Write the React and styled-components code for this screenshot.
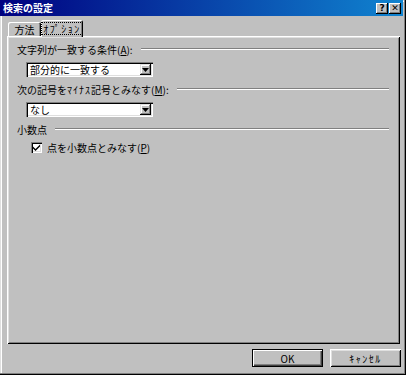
import React from "react";
import styled, { createGlobalStyle } from "styled-components";

const GlobalStyle = createGlobalStyle`
  body {
    margin: 0;
    background: #fff;
    font-family: "Noto Sans CJK JP", "Noto Sans", sans-serif;
  }
`;

const Window = styled.div`
  width: 406px;
  height: 375px;
  box-sizing: border-box;
  background: #c0c0c0;
  display: flex;
  flex-direction: column;
  font-size: 10px;
  color: #000;
  box-shadow: inset -1px -1px #000, inset -2px -2px #808080,
    inset 1px 1px #dfdfdf, inset 2px 2px #fff;
`;

const TitleBar = styled.div`
  width: 403px;
  height: 16px;
  box-sizing: border-box;
  padding: 0 2px 0 3px;
  display: flex;
  align-items: center;
  justify-content: space-between;
  background: linear-gradient(90deg, #000080 0%, #1084d0 100%);
`;

const Title = styled.span`
  color: #fff;
  font-size: 10px;
  font-weight: bold;
  line-height: 16px;
`;

const TitleButtons = styled.div`
  display: flex;
  gap: 1px;
`;

const TitleButton = styled.div`
  width: 12px;
  height: 11px;
  background: #c0c0c0;
  display: flex;
  align-items: center;
  justify-content: center;
  font-family: "DejaVu Sans", sans-serif;
  font-weight: bold;
  font-size: 9px;
  line-height: 1;
  box-shadow: inset -1px -1px #000, inset 1px 1px #fff, inset -2px -2px #808080;
`;

const TabRow = styled.div`
  display: flex;
  align-items: flex-end;
  height: 16px;
  margin-top: 4px;
  padding-left: 8px;
`;

const Tab = styled.div`
  position: relative;
  z-index: ${(p) => (p.$active ? 1 : 0)};
  width: ${(p) => p.$width}px;
  height: ${(p) => (p.$active ? 17 : 14)}px;
  margin-bottom: ${(p) => (p.$active ? -1 : 0)}px;
  box-sizing: border-box;
  background: #c0c0c0;
  border-radius: 2px 2px 0 0;
  display: flex;
  align-items: center;
  justify-content: center;
  white-space: nowrap;
  box-shadow: inset 1px 1px #fff, inset -1px 0 #000, inset -2px 0 #808080;
`;

const Focus = styled.span`
  outline: 1px dotted #000;
  outline-offset: 0;
  padding: 0 1px;
  line-height: 11px;
`;

/* half-width katakana render very narrow in Noto, so spread them out */
const HalfKana = styled.span`
  letter-spacing: ${(p) => p.$spacing || 1}px;
`;

const Panel = styled.div`
  margin-left: 7px;
  width: 393px;
  height: 308px;
  box-sizing: border-box;
  padding: 6px 11px 0 10px;
  display: flex;
  flex-direction: column;
  box-shadow: inset 1px 1px #fff, inset -1px -1px #000,
    inset 2px 2px #dfdfdf, inset -2px -2px #808080;
`;

const GroupHeader = styled.div`
  display: flex;
  align-items: center;
  height: 14px;
  gap: 8px;
  margin-top: ${(p) => p.$gap || 0}px;
  white-space: nowrap;
`;

const Etch = styled.div`
  flex: 1;
  height: 2px;
  box-sizing: border-box;
  border-top: 1px solid #808080;
  border-bottom: 1px solid #fff;
`;

const Combo = styled.div`
  margin: 6px 0 0 9px;
  width: 127px;
  height: 15px;
  box-sizing: border-box;
  padding: 2px;
  display: flex;
  align-items: center;
  background: #fff;
  box-shadow: inset 1px 1px #808080, inset 2px 2px #000,
    inset -1px -1px #fff, inset -2px -2px #dfdfdf;
`;

const ComboText = styled.span`
  flex: 1;
  padding-left: 2px;
  line-height: 11px;
  white-space: nowrap;
`;

const DropButton = styled.div`
  width: 11px;
  height: 11px;
  background: #c0c0c0;
  display: flex;
  align-items: center;
  justify-content: center;
  box-shadow: inset -1px -1px #000, inset 1px 1px #dfdfdf, inset -2px -2px #808080,
    inset 2px 2px #fff;
`;

const CheckRow = styled.label`
  display: flex;
  align-items: center;
  gap: 5px;
  margin: 4px 0 0 14px;
  white-space: nowrap;
`;

const CheckBox = styled.span`
  width: 11px;
  height: 11px;
  box-sizing: border-box;
  background: #fff;
  display: flex;
  align-items: center;
  justify-content: center;
  box-shadow: inset 1px 1px #808080, inset 2px 2px #000,
    inset -1px -1px #fff, inset -2px -2px #dfdfdf;
`;

const ButtonRow = styled.div`
  display: flex;
  justify-content: flex-end;
  gap: 7px;
  margin-top: 5px;
  padding-right: 5px;
`;

const Button = styled.div`
  width: 71px;
  height: 18px;
  box-sizing: border-box;
  display: flex;
  align-items: center;
  justify-content: center;
  background: #c0c0c0;
  box-shadow: ${(p) =>
    p.$default
      ? "inset 1px 1px #000, inset -1px -1px #000, inset 2px 2px #fff, inset -2px -2px #404040, inset -3px -3px #808080"
      : "inset 1px 1px #fff, inset -1px -1px #000, inset 2px 2px #dfdfdf, inset -2px -2px #808080"};
`;

const Arrow = () => (
  <svg width="7" height="4" viewBox="0 0 7 4">
    <path d="M0 0h7L3.5 4z" fill="#000" />
  </svg>
);

const Check = () => (
  <svg width="7" height="7" viewBox="0 0 7 7">
    <path d="M0 2.5l2.5 2.5L7 0.5v2L2.5 7 0 4.5z" fill="#000" />
  </svg>
);

const App = () => {
  return (
    <>
      <GlobalStyle />
      <Window>
        <TitleBar>
          <Title>検索の設定</Title>
          <TitleButtons>
            <TitleButton>?</TitleButton>
            <TitleButton>✕</TitleButton>
          </TitleButtons>
        </TitleBar>

        <TabRow>
          <Tab $width={33}>方法</Tab>
          <Tab $width={42} $active>
            <Focus>
              <HalfKana $spacing={1.5}>ｵﾌﾟｼｮﾝ</HalfKana>
            </Focus>
          </Tab>
        </TabRow>

        <Panel>
          <GroupHeader>
            <span>
              文字列が一致する条件(<u>A</u>):
            </span>
            <Etch />
          </GroupHeader>
          <Combo>
            <ComboText>部分的に一致する</ComboText>
            <DropButton>
              <Arrow />
            </DropButton>
          </Combo>

          <GroupHeader $gap={5}>
            <span>
              次の記号を<HalfKana>ﾏｲﾅｽ</HalfKana>記号とみなす(<u>M</u>):
            </span>
            <Etch />
          </GroupHeader>
          <Combo>
            <ComboText>なし</ComboText>
            <DropButton>
              <Arrow />
            </DropButton>
          </Combo>

          <GroupHeader $gap={5}>
            <span>小数点</span>
            <Etch />
          </GroupHeader>
          <CheckRow>
            <CheckBox>
              <Check />
            </CheckBox>
            <span>
              点を小数点とみなす(<u>P</u>)
            </span>
          </CheckRow>
        </Panel>

        <ButtonRow>
          <Button $default>OK</Button>
          <Button>
            <HalfKana $spacing={1.5}>ｷｬﾝｾﾙ</HalfKana>
          </Button>
        </ButtonRow>
      </Window>
    </>
  );
};

export default App;
